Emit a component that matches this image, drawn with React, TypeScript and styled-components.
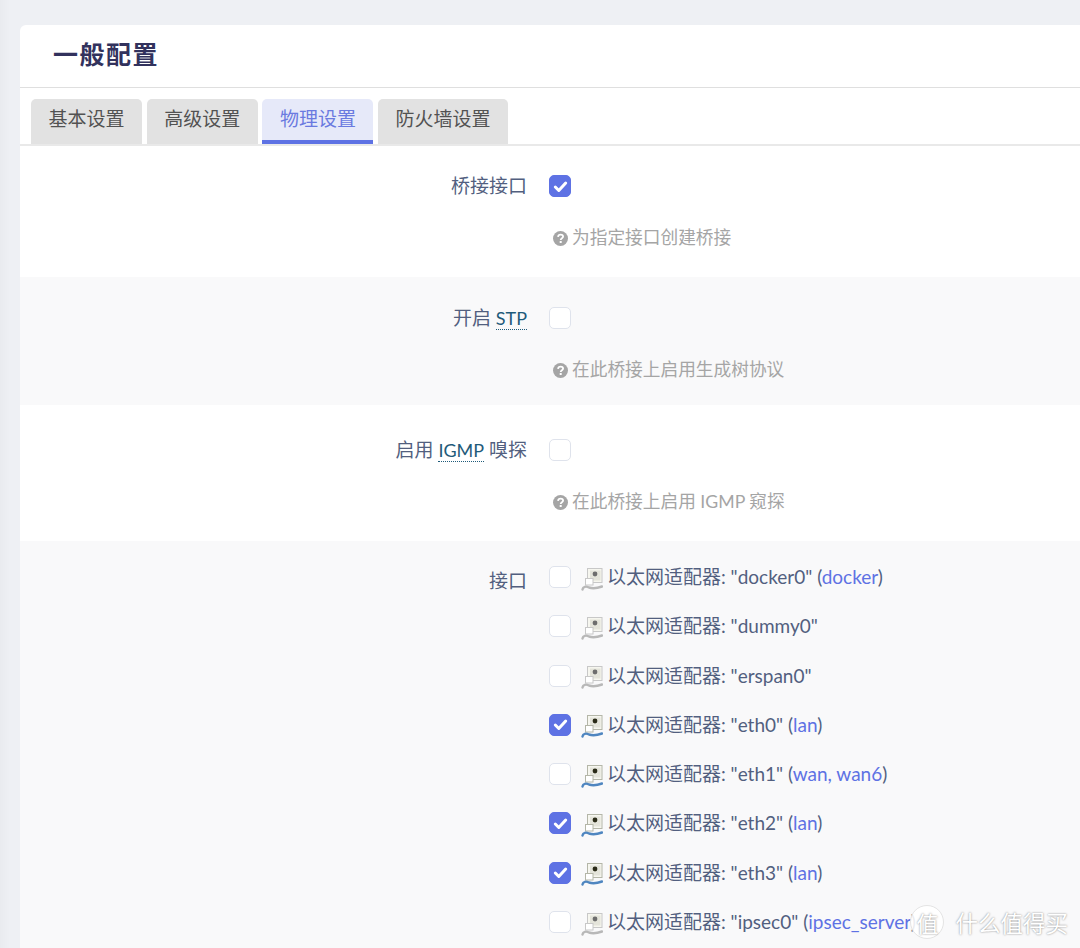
import React from 'react';
import styled, { createGlobalStyle } from 'styled-components';

const GlobalStyle = createGlobalStyle`
    html, body {
        margin: 0;
        padding: 0;
        height: 948px;
        overflow: hidden;
        background: #eef0f4;
        font-family: Lato, "Noto Sans CJK SC", sans-serif;
    }
`;

const Page = styled.div`
    position: relative;
    height: 948px;
    overflow: hidden;
    padding: 25px 0 0 20px;
    box-sizing: border-box;
    background: linear-gradient(90deg, #e9ebef 0, #eef0f4 10px);
`;

const Card = styled.div`
    background: #fff;
    border-radius: 6px 0 0 0;
    height: 923px;
`;

const Title = styled.h3`
    margin: 0;
    height: 63px;
    box-sizing: border-box;
    padding: 12px 0 0 33px;
    font-size: 25px;
    line-height: 34px;
    font-weight: 700;
    letter-spacing: 1.5px;
    color: #32325d;
    border-bottom: 1px solid #dfdfdf;
`;

const TabBar = styled.ul`
    display: flex;
    gap: 4.700px;
    margin: 0;
    padding: 11px 0 0 11px;
    list-style: none;
    height: 45px;
    border-bottom: 2px solid #e9e9e9;
`;

const Tab = styled.li<{ $active?: boolean }>`
    height: 45px;
    box-sizing: border-box;
    padding: 7px 17.500px 0;
    font-size: 19px;
    line-height: 26px;
    border-radius: 5px 5px 0 0;
    color: ${(props) => (props.$active ? '#6a7ae0' : '#525252')};
    background: ${(props) => (props.$active ? '#e6e9f9' : '#e2e2e2')};
    border-bottom: ${(props) => (props.$active ? '4px solid #5e72e4' : '0')};
`;

const Section = styled.div<{ $shade?: boolean; $height: number; $top: number }>`
    display: grid;
    grid-template-columns: 507px 1fr;
    column-gap: 22px;
    box-sizing: border-box;
    height: ${(props) => props.$height}px;
    padding-top: ${(props) => props.$top}px;
    background: ${(props) => (props.$shade ? '#f9f9fa' : '#fff')};
`;

const Label = styled.div`
    text-align: right;
    font-size: 19px;
    line-height: 22px;
    color: #525f7f;
`;

const Abbr = styled.abbr`
    color: #1f5b7a;
    font-size: 18px;
    text-decoration: none;
    border-bottom: 1px dotted #1f5b7a;
`;

const Field = styled.div`
    display: flex;
    flex-direction: column;
    align-items: flex-start;
`;

const Box = styled.span<{ $checked?: boolean }>`
    display: flex;
    align-items: center;
    justify-content: center;
    flex: none;
    width: 22px;
    height: 22px;
    box-sizing: border-box;
    border-radius: 5px;
    background: ${(props) => (props.$checked ? '#5e72e4' : '#fff')};
    border: 1px solid ${(props) => (props.$checked ? '#5e72e4' : '#dfe3ec')};
`;

const Help = styled.div`
    display: flex;
    align-items: center;
    gap: 4px;
    margin: 29px 0 0 4px;
    font-size: 17.700px;
    line-height: 24px;
    color: #a5a5a5;
`;

const IfaceList = styled.div`
    display: flex;
    flex-direction: column;
    gap: 25.300px;
    margin-top: -5px;
`;

const IfaceRow = styled.div`
    display: flex;
    align-items: center;
    height: 24px;
    white-space: nowrap;
    font-size: 19px;
    line-height: 24px;
    color: #525f7f;
`;

const IfaceName = styled.span`
    margin-left: 4px;
`;

const Zone = styled.span`
    color: #5e72e4;
`;

const IconSlot = styled.svg`
    flex: none;
    margin: 3px 0 0 10px;
    width: 22px;
    height: 24px;
`;

const Watermark = styled.div`
    position: absolute;
    right: 12px;
    bottom: 9px;
    display: flex;
    align-items: center;
    gap: 11px;
    color: #fff;
    font-size: 22.500px;
    text-shadow: 0 0 2px rgba(0, 0, 0, 0.5);
`;

const WatermarkBadge = styled.span`
    display: flex;
    align-items: center;
    justify-content: center;
    width: 32px;
    height: 32px;
    border-radius: 50%;
    border: 1px solid #e4e4e4;
    background: rgba(255, 255, 255, 0.88);
    font-size: 22px;
`;

function Check() {
    return (
        <svg width="15" height="15" viewBox="0 0 15 15">
            <path d="M2.300 8L5.800 11.500L12.700 4" fill="none" stroke="#fff" strokeWidth="3" strokeLinecap="round" strokeLinejoin="round" />
        </svg>
    );
}

function HelpIcon() {
    return (
        <svg width="15" height="15" viewBox="0 0 15 15">
            <circle cx="7.500" cy="7.500" r="7.500" fill="#a5a5a5" />
            <path d="M5 5.800C5.200 4.300 6.300 3.600 7.600 3.600C9 3.600 10.100 4.400 10.100 5.600C10.100 7.300 7.800 7.200 7.700 9" fill="none" stroke="#fff" strokeWidth="1.800" />
            <rect x="6.700" y="10" width="2" height="2" fill="#fff" />
        </svg>
    );
}

// 接口图标, up 决定网线是否为蓝色
function PortIcon({ up }: { up: boolean }) {
    const cable = up ? '#4f86c0' : '#b8b8b8';
    const frame = up ? '#b4b6a8' : '#c8c8c8';
    const core = up ? '#2b2b18' : '#6d6d6d';
    return (
        <IconSlot viewBox="0 0 22 24">
            <rect x="6.500" y="1.500" width="14.500" height="14" fill="#f6f6ef" stroke={frame} />
            <rect x="9" y="3.500" width="10.500" height="10" fill="#e4e4da" />
            <circle cx="14" cy="7" r="2.400" fill={core} />
            <rect x="4.500" y="11.500" width="7.500" height="6.500" fill="#fff" stroke={frame} />
            <path d="M1.500 22.500C2 19.500 5 19 8 20.500C12 21.800 16 21.300 21 19.500" fill="none" stroke={cable} strokeWidth="2.400" strokeLinecap="round" />
        </IconSlot>
    );
}

const interfaces = [
    { name: 'docker0', zones: 'docker', checked: false, up: false },
    { name: 'dummy0', zones: '', checked: false, up: false },
    { name: 'erspan0', zones: '', checked: false, up: false },
    { name: 'eth0', zones: 'lan', checked: true, up: true },
    { name: 'eth1', zones: 'wan, wan6', checked: false, up: true },
    { name: 'eth2', zones: 'lan', checked: true, up: true },
    { name: 'eth3', zones: 'lan', checked: true, up: true },
    { name: 'ipsec0', zones: 'ipsec_server', checked: false, up: false },
];

export default function App() {
    return (
        <Page>
            <GlobalStyle />
            <Card>
                <Title>一般配置</Title>
                <TabBar>
                    <Tab>基本设置</Tab>
                    <Tab>高级设置</Tab>
                    <Tab $active>物理设置</Tab>
                    <Tab>防火墙设置</Tab>
                </TabBar>
                <Section $height={131} $top={29}>
                    <Label>桥接接口</Label>
                    <Field>
                        <Box $checked><Check /></Box>
                        <Help><HelpIcon />为指定接口创建桥接</Help>
                    </Field>
                </Section>
                <Section $shade $height={128} $top={30}>
                    <Label>开启 <Abbr>STP</Abbr></Label>
                    <Field>
                        <Box />
                        <Help><HelpIcon />在此桥接上启用生成树协议</Help>
                    </Field>
                </Section>
                <Section $height={136} $top={34}>
                    <Label>启用 <Abbr>IGMP</Abbr> 嗅探</Label>
                    <Field>
                        <Box />
                        <Help><HelpIcon />在此桥接上启用 IGMP 窥探</Help>
                    </Field>
                </Section>
                <Section $shade $height={407} $top={29}>
                    <Label>接口</Label>
                    <IfaceList>
                        {interfaces.map((item) => (
                            <IfaceRow key={item.name}>
                                <Box $checked={item.checked}>{item.checked && <Check />}</Box>
                                <PortIcon up={item.up} />
                                <IfaceName>
                                    以太网适配器: "{item.name}"
                                    {item.zones && <> (<Zone>{item.zones}</Zone>)</>}
                                </IfaceName>
                            </IfaceRow>
                        ))}
                    </IfaceList>
                </Section>
            </Card>
            <Watermark>
                <WatermarkBadge>值</WatermarkBadge>
                什么值得买
            </Watermark>
        </Page>
    );
}
